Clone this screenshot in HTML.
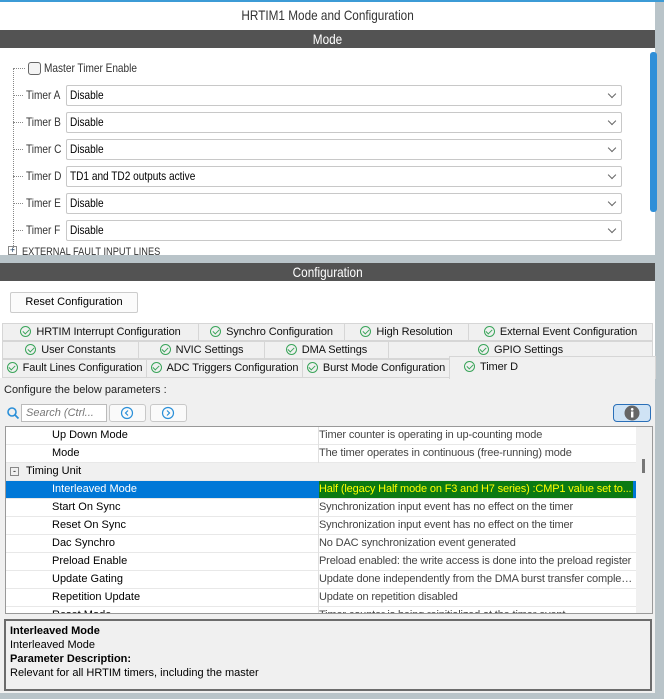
<!DOCTYPE html>
<html><head><meta charset="utf-8"><style>
*{box-sizing:border-box;margin:0;padding:0}
body{width:664px;height:699px;overflow:hidden;background:#fff;font-family:"Liberation Sans",sans-serif;font-size:12px;color:#000;position:relative}
.a{position:absolute}
.nx{display:inline-block;transform:scaleX(.84);transform-origin:left center;white-space:nowrap}
.nc{display:inline-block;transform:scaleX(.84);transform-origin:center center;white-space:nowrap}
.bar{background:#535353;color:#fff;text-align:center;font-size:14px;height:18px;line-height:18px}
.sel{position:absolute;left:66px;width:556px;height:21px;border:1px solid #c8c8c8;border-radius:2px;background:#fff;font-size:12px;line-height:19px;padding-left:3px}
.sel:after{content:"";position:absolute;right:6px;top:5px;width:5px;height:5px;border-right:1px solid #666;border-bottom:1px solid #666;transform:rotate(45deg)}
.lbl{position:absolute;left:26px;font-size:12px;color:#333}
.dot{position:absolute;left:13px;width:10px;border-top:1px dotted #888}
.tab{position:absolute;height:18px;background:#f0f0f0;border:1px solid #d6d6d6;font-size:11px;line-height:16px;text-align:center;color:#111;white-space:nowrap;overflow:hidden;letter-spacing:-0.1px}
.ck{display:inline-block;width:11px;height:11px;border:1.3px solid #3aa55a;border-radius:50%;vertical-align:-2px;margin-right:5px;position:relative}
.ck:after{content:"";position:absolute;left:2.5px;top:1px;width:3px;height:5px;border-right:1.3px solid #3aa55a;border-bottom:1.3px solid #3aa55a;transform:rotate(45deg)}
.row{position:absolute;left:0;width:630px;height:18px;line-height:17px;border-bottom:1px solid #e8e8e8;font-size:11px;background:#fff;white-space:nowrap}
.row .k{position:absolute;left:46px}
.row .v{position:absolute;left:313px;color:#444;white-space:nowrap;overflow:hidden;text-overflow:ellipsis;width:314px;letter-spacing:-0.15px}
.row .d{position:absolute;left:312px;top:0;height:18px;border-left:1px solid #e0e0e0}
.t1{top:323px}.t2{top:341px}.t3{top:359px;height:19px}
</style></head><body>
<div class="a" style="left:0;top:0;width:664px;height:2px;background:#3c9bd6"></div>
<div class="a" style="left:0;top:7px;width:655px;text-align:center;font-size:14px;color:#333"><span class="nc">HRTIM1 Mode and Configuration</span></div>
<div class="a" style="left:655px;top:2px;width:9px;height:697px;background:#b9c4c9"></div>
<div class="a bar" style="left:0;top:30px;width:655px"><span class="nc">Mode</span></div>
<div class="a" style="left:650px;top:52px;width:7px;height:160px;background:#2f8fd8;border-radius:3px"></div>
<div class="a" style="left:13px;top:68px;height:182px;border-left:1px dotted #888"></div>
<div class="dot" style="top:68px;width:12px"></div>
<div class="a" style="left:28px;top:62px;width:13px;height:13px;border:1px solid #666;border-radius:3px;background:#f4f4f4"></div>
<div class="a" style="left:44px;top:61px;font-size:12px;color:#333"><span class="nx">Master Timer Enable</span></div>
<div class="dot" style="top:95px"></div><div class="lbl" style="top:88px"><span class="nx">Timer A</span></div><div class="sel"  style="top:85px"><span class="nx">Disable</span></div>
<div class="dot" style="top:122px"></div><div class="lbl" style="top:115px"><span class="nx">Timer B</span></div><div class="sel" style="top:112px"><span class="nx">Disable</span></div>
<div class="dot" style="top:149px"></div><div class="lbl" style="top:142px"><span class="nx">Timer C</span></div><div class="sel" style="top:139px"><span class="nx">Disable</span></div>
<div class="dot" style="top:176px"></div><div class="lbl" style="top:169px"><span class="nx">Timer D</span></div><div class="sel" style="top:166px"><span class="nx">TD1 and TD2 outputs active</span></div>
<div class="dot" style="top:203px"></div><div class="lbl" style="top:196px"><span class="nx">Timer E</span></div><div class="sel" style="top:193px"><span class="nx">Disable</span></div>
<div class="dot" style="top:230px"></div><div class="lbl" style="top:223px"><span class="nx">Timer F</span></div><div class="sel" style="top:220px"><span class="nx">Disable</span></div>
<div class="a" style="left:8px;top:246px;width:9px;height:9px;border:1px solid #888;font-size:9px;line-height:7px;text-align:center;color:#246">+</div>
<div class="a" style="left:22px;top:245px;height:10px;overflow:hidden;font-size:11px;color:#333;line-height:14px"><span class="nx">EXTERNAL FAULT INPUT LINES</span></div>
<div class="a" style="left:0;top:255px;width:655px;height:8px;background:#b9c4c9"></div>
<div class="a bar" style="left:0;top:263px;width:655px"><span class="nc">Configuration</span></div>
<div class="a" style="left:10px;top:292px;width:128px;height:21px;border:1px solid #ccc;border-radius:2px;background:#fbfbfb;text-align:center;line-height:19px;font-size:11px">Reset Configuration</div>
<div class="a" style="left:0;top:378px;width:655px;height:321px;background:#f0f0f0"></div>
<div class="tab t1" style="left:2px;width:197px"><span class="ck"></span>HRTIM Interrupt Configuration</div>
<div class="tab t1" style="left:198px;width:147px"><span class="ck"></span>Synchro Configuration</div>
<div class="tab t1" style="left:344px;width:125px"><span class="ck"></span>High Resolution</div>
<div class="tab t1" style="left:468px;width:185px"><span class="ck"></span>External Event Configuration</div>
<div class="tab t2" style="left:2px;width:137px"><span class="ck"></span>User Constants</div>
<div class="tab t2" style="left:138px;width:127px"><span class="ck"></span>NVIC Settings</div>
<div class="tab t2" style="left:264px;width:125px"><span class="ck"></span>DMA Settings</div>
<div class="tab t2" style="left:388px;width:265px"><span class="ck"></span>GPIO Settings</div>
<div class="tab t3" style="left:2px;width:145px"><span class="ck"></span>Fault Lines Configuration</div>
<div class="tab t3" style="left:146px;width:157px"><span class="ck"></span>ADC Triggers Configuration</div>
<div class="tab t3" style="left:302px;width:148px"><span class="ck"></span>Burst Mode Configuration</div>
<div class="tab" style="left:449px;top:356px;width:207px;height:23px;background:#f0f0f0;border-bottom:none;line-height:20px;text-align:left;padding-left:14px;font-size:11px"><span class="ck"></span>Timer D</div>
<div class="a" style="left:4px;top:384px;font-size:11px;color:#222">Configure the below parameters :</div>
<svg class="a" style="left:6px;top:406px" width="14" height="14"><circle cx="6" cy="6" r="4" fill="none" stroke="#2a8fd8" stroke-width="1.6"/><line x1="9" y1="9" x2="12.5" y2="12.5" stroke="#2a8fd8" stroke-width="1.8"/></svg>
<div class="a" style="left:21px;top:404px;width:86px;height:18px;border:1px solid #bbb;background:#fff;font-style:italic;color:#777;font-size:11px;line-height:16px;padding-left:4px;white-space:nowrap;overflow:hidden">Search (Ctrl...</div>
<div class="a" style="left:109px;top:404px;width:37px;height:18px;border:1px solid #c8c8c8;border-radius:3px;background:#fafafa"></div>
<div class="a" style="left:150px;top:404px;width:37px;height:18px;border:1px solid #c8c8c8;border-radius:3px;background:#fafafa"></div>
<svg class="a" style="left:120px;top:406px" width="14" height="14"><circle cx="7" cy="7" r="5.5" fill="none" stroke="#2a8fd8" stroke-width="1.2"/><path d="M8 4.5L5.5 7L8 9.5" fill="none" stroke="#2a8fd8" stroke-width="1.2"/></svg>
<svg class="a" style="left:161px;top:406px" width="14" height="14"><circle cx="7" cy="7" r="5.5" fill="none" stroke="#2a8fd8" stroke-width="1.2"/><path d="M6 4.5L8.5 7L6 9.5" fill="none" stroke="#2a8fd8" stroke-width="1.2"/></svg>
<div class="a" style="left:613px;top:404px;width:38px;height:18px;border:1px solid #2a6fb8;border-radius:4px;background:#cfe3f5"></div>
<svg class="a" style="left:624px;top:405px" width="16" height="16"><circle cx="8" cy="8" r="7.5" fill="#666"/><rect x="7" y="6.5" width="2.4" height="6" fill="#fff"/><circle cx="8.2" cy="4.3" r="1.3" fill="#fff"/></svg>
<div class="a" style="left:5px;top:426px;width:648px;height:188px;border:1px solid #999;background:#fff;overflow:hidden">
<div class="a" style="left:630px;top:0;width:17px;height:188px;background:#f0f0f0"></div>
<div class="a" style="left:636px;top:32px;width:3px;height:14px;background:#777"></div>
<div class="row" style="top:0"><span class="k">Up Down Mode</span><span class="d"></span><span class="v">Timer counter is operating in up-counting mode</span></div>
<div class="row" style="top:18px"><span class="k">Mode</span><span class="d"></span><span class="v">The timer operates in continuous (free-running) mode</span></div>
<div class="row" style="top:36px;background:#f0f0f0"><span style="position:absolute;left:4px;top:4px;width:9px;height:9px;border:1px solid #888;font-size:9px;line-height:6px;text-align:center">-</span><span style="position:absolute;left:20px">Timing Unit</span></div>
<div class="row" style="top:54px;background:#0078d7;color:#fff"><span class="k">Interleaved Mode</span><span class="v" style="background:#0b7a12;color:#ffff00">Half (legacy Half mode on F3 and H7 series) :CMP1 value set to...</span></div>
<div class="row" style="top:72px"><span class="k">Start On Sync</span><span class="d"></span><span class="v">Synchronization input event has no effect on the timer</span></div>
<div class="row" style="top:90px"><span class="k">Reset On Sync</span><span class="d"></span><span class="v">Synchronization input event has no effect on the timer</span></div>
<div class="row" style="top:108px"><span class="k">Dac Synchro</span><span class="d"></span><span class="v">No DAC synchronization event generated</span></div>
<div class="row" style="top:126px"><span class="k">Preload Enable</span><span class="d"></span><span class="v">Preload enabled: the write access is done into the preload register</span></div>
<div class="row" style="top:144px"><span class="k">Update Gating</span><span class="d"></span><span class="v">Update done independently from the DMA burst transfer completion</span></div>
<div class="row" style="top:162px"><span class="k">Repetition Update</span><span class="d"></span><span class="v">Update on repetition disabled</span></div>
<div class="row" style="top:180px"><span class="k">Reset Mode</span><span class="d"></span><span class="v">Timer counter is being reinitialized at the timer event</span></div>
</div>
<div class="a" style="left:4px;top:619px;width:648px;height:72px;border:2px solid #6c6c6c;background:#f0f0f0;padding:3px 4px;font-size:11px;line-height:14px">
<b>Interleaved Mode</b><br>Interleaved Mode<br><b>Parameter Description:</b><br>Relevant for all HRTIM timers, including the master</div>
<div class="a" style="left:0;top:693px;width:664px;height:6px;background:#b9c4c9"></div>
</body></html>
